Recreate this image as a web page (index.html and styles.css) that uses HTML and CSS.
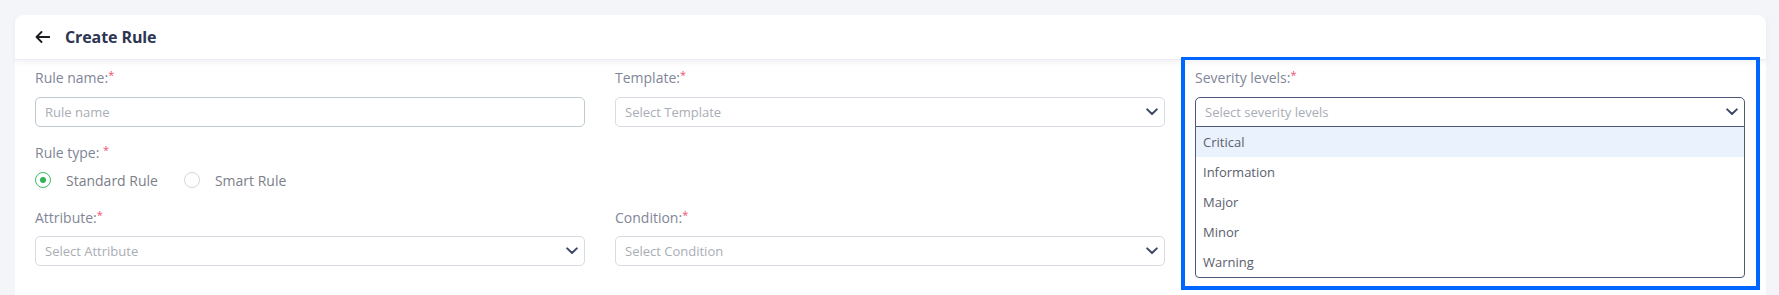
FILE: index.html
```html
<!DOCTYPE html>
<html lang="en">
<head>
<meta charset="utf-8">
<title>Create Rule</title>
<link rel="stylesheet" href="styles.css">
</head>
<body>
<div class="page">
  <div class="card">
    <div class="card-header">
      <svg class="back" width="15" height="12" viewBox="0 0 15 12" aria-hidden="true">
        <path d="M14.5 6H1.5M6.5 1L1.5 6l5 5" fill="none" stroke="#1b1d22" stroke-width="1.8" stroke-linecap="round" stroke-linejoin="round"/>
      </svg>
      <h1 class="title">Create Rule</h1>
    </div>
    <div class="form">
      <div class="field c1 r1">
        <label class="label">Rule name:<span class="req">*</span></label>
        <div class="input input-text"><span class="placeholder">Rule name</span></div>
      </div>
      <div class="field c2 r1">
        <label class="label">Template:<span class="req">*</span></label>
        <div class="input select"><span class="placeholder">Select Template</span>
          <svg class="chev" width="12" height="8" viewBox="0 0 12 8"><path d="M1.2 1.4L6 6l4.8-4.6" fill="none" stroke="#3d476a" stroke-width="2" stroke-linecap="round" stroke-linejoin="round"/></svg>
        </div>
      </div>
      <div class="field c3 r1">
        <div class="highlight"></div>
        <label class="label">Severity levels:<span class="req">*</span></label>
        <div class="input select select-open"><span class="placeholder">Select severity levels</span>
          <svg class="chev" width="12" height="8" viewBox="0 0 12 8"><path d="M1.2 1.4L6 6l4.8-4.6" fill="none" stroke="#3d476a" stroke-width="2" stroke-linecap="round" stroke-linejoin="round"/></svg>
          <ul class="menu">
            <li class="opt active">Critical</li>
            <li class="opt">Information</li>
            <li class="opt">Major</li>
            <li class="opt">Minor</li>
            <li class="opt">Warning</li>
          </ul>
        </div>
      </div>

      <div class="field c1 r2 field-type">
        <label class="label">Rule type: <span class="req">*</span></label>
        <div class="radios">
          <span class="radio checked"><span class="dot"></span></span>
          <span class="radio-text">Standard Rule</span>
          <span class="radio"></span>
          <span class="radio-text">Smart Rule</span>
        </div>
      </div>

      <div class="field c1 r3 field-row3">
        <label class="label">Attribute:<span class="req">*</span></label>
        <div class="input select"><span class="placeholder">Select Attribute</span>
          <svg class="chev" width="12" height="8" viewBox="0 0 12 8"><path d="M1.2 1.4L6 6l4.8-4.6" fill="none" stroke="#3d476a" stroke-width="2" stroke-linecap="round" stroke-linejoin="round"/></svg>
        </div>
      </div>
      <div class="field c2 r3 field-row3">
        <label class="label">Condition:<span class="req">*</span></label>
        <div class="input select"><span class="placeholder">Select Condition</span>
          <svg class="chev" width="12" height="8" viewBox="0 0 12 8"><path d="M1.2 1.4L6 6l4.8-4.6" fill="none" stroke="#3d476a" stroke-width="2" stroke-linecap="round" stroke-linejoin="round"/></svg>
        </div>
      </div>
    </div>
  </div>
</div>
</body>
</html>
```
FILE: styles.css
```css
* { box-sizing: border-box; }
html, body { margin: 0; padding: 0; }
body {
  background: #f4f5f8;
  font-family: "Open Sans", Lato, Arial, sans-serif;
  overflow: hidden;
  height: 295px;
}
.page {
  padding: 15px 13px 0 15px;
}
.card {
  background: #fff;
  border-radius: 9px 9px 0 0;
  height: 280px;
}
.card-header {
  height: 45px;
  display: flex;
  align-items: center;
  padding-left: 20px;
  border-bottom: 1px solid #ecebf5;
  box-shadow: 0 3px 5px rgba(40, 40, 80, 0.05);
  position: relative;
}
.back { display: block; flex: none; }
.title {
  margin: 0 0 0 15px;
  font-size: 16px;
  font-weight: 700;
  color: #2c3552;
  line-height: 20px;
  letter-spacing: -0.1px;
}
.form {
  display: grid;
  grid-template-columns: 1fr 1fr 1fr;
  column-gap: 30px;
  padding: 8px 21px 0 20px;
  align-items: start;
}
.c1 { grid-column: 1; }
.c2 { grid-column: 2; }
.c3 { grid-column: 3; }
.r1 { grid-row: 1; }
.r2 { grid-row: 2; }
.r3 { grid-row: 3; }
.field { position: relative; }
.label {
  display: block;
  font-size: 14px;
  line-height: 20px;
  color: #808698;
  margin-bottom: 9px;
}
.req {
  color: #f2516f;
  font-size: 11px;
  vertical-align: top;
  line-height: 14px;
}
.input {
  height: 30px;
  border: 1px solid #d7dbe2;
  border-radius: 5px;
  display: flex;
  align-items: center;
  padding: 0 6px 0 9px;
  position: relative;
  background: #fff;
}
.input-text { border-color: #bfcace; }
.placeholder {
  font-size: 13px;
  color: #a9adb5;
  flex: 1;
}
.chev { display: block; flex: none; }
.select-open {
  border-color: #4d587a;
  border-radius: 5px 5px 0 0;
}
.menu {
  position: absolute;
  left: -1px;
  right: -1px;
  top: 28px;
  margin: 0;
  padding: 0;
  list-style: none;
  background: #fff;
  border: 1px solid #4d587a;
  border-radius: 0 0 4px 4px;
  z-index: 5;
}
.opt {
  height: 30px;
  line-height: 30px;
  padding-left: 7px;
  font-size: 13px;
  color: #5a606c;
}
.opt.active { background: #eaf3fd; }
.highlight {
  position: absolute;
  left: -14px;
  top: -11px;
  width: 579px;
  height: 233px;
  border: 4px solid #0066ff;
  border-top-width: 3px;
  z-index: 6;
  pointer-events: none;
}
.field-type {
  margin-top: 16px;
}
.field-type .label { margin-bottom: 7px; }
.radios {
  display: flex;
  align-items: center;
  height: 20px;
}
.radio {
  width: 16px;
  height: 16px;
  border-radius: 50%;
  border: 1px solid #d3d7de;
  display: flex;
  align-items: center;
  justify-content: center;
  flex: none;
}
.radio.checked { border-color: #3dbb61; }
.dot {
  width: 6px;
  height: 6px;
  border-radius: 50%;
  background: #2fb457;
}
.radio-text {
  font-size: 14px;
  color: #7c8089;
  margin-left: 15px;
  margin-right: 26px;
}
.field-row3 {
  margin-top: 18px;
}
.field-row3 .label { margin-bottom: 8px; }
```
